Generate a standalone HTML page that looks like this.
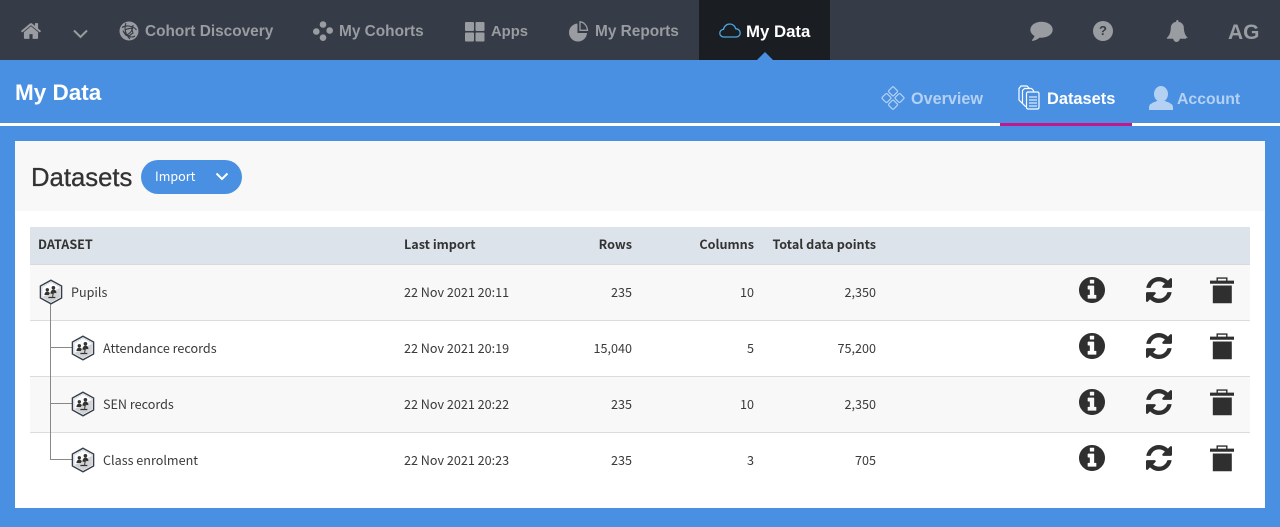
<!DOCTYPE html>
<html lang="en">
<head>
<meta charset="utf-8">
<title>My Data</title>
<style>
html,body{margin:0;padding:0;width:1280px;height:527px;overflow:hidden;background:#4a90e2}
body{position:relative;font-family:"Noto Sans CJK JP","Liberation Sans",sans-serif;color:#333}
.a{position:absolute}
.t{position:absolute;white-space:nowrap}
.n{font-family:"Liberation Sans",sans-serif;font-weight:700;font-size:15.400px;line-height:20px;color:#999ca0;top:22px}
.s{font-family:"Liberation Sans",sans-serif;font-weight:700;font-size:16.200px;line-height:20px;color:#b4d1f4;top:89px}
.c{font-size:12.600px;line-height:18px;color:#3a3a3a}
.h{font-size:12.600px;line-height:18px;font-weight:700;color:#333;top:235px}
.r{text-align:right}
svg{position:absolute;overflow:visible}
</style>
</head>
<body>
<svg width="0" height="0" style="position:absolute">
<defs>
<symbol id="hex" viewBox="0 0 24 26" overflow="visible">
<path d="M12 1.200 22.600 7v12L12 24.800 1.400 19V7Z" fill="#fff" stroke="#3a3d42" stroke-width="1.400"/>
<path d="M3 8 12 3l9 5v10l-9 5-9-5Z" fill="#fbfbfb" stroke="#9cc0e8" stroke-width=".5"/>
<path d="M20.600 9v9L12 22.600 3.600 18Z" fill="#d2d2d2"/>
<circle cx="8.300" cy="10.800" r="1.700" fill="#333"/>
<path d="M5.400 16c.2-2.200 1.200-3.400 2.900-3.400 1.200 0 2 .5 2.500 1.500l-1 1.900Z" fill="#333"/>
<circle cx="14.400" cy="8.800" r="1.800" fill="#333"/>
<path d="M11.400 14.600c.2-2.400 1.300-4 3.100-4 1.700 0 2.800 1.200 3 3.300l-2.800.4-.6 3.600h2.200v1.200H9.400v-1.200h3.800l.3-3Z" fill="#333"/>
</symbol>
<symbol id="info" viewBox="128 128 1536 1536"><path fill="#2f2f2f" d="M1152 1376v-160q0-14-9-23t-23-9h-96v-512q0-14-9-23t-23-9h-320q-14 0-23 9t-9 23v160q0 14 9 23t23 9h96v320h-96q-14 0-23 9t-9 23v160q0 14 9 23t23 9h448q14 0 23-9t9-23zm-128-896v-160q0-14-9-23t-23-9h-192q-14 0-23 9t-9 23v160q0 14 9 23t23 9h192q14 0 23-9t9-23zm640 416q0 209-103 385.500t-279.500 279.500-385.500 103-385.500-103-279.500-279.500-103-385.500 103-385.500 279.500-279.500 385.500-103 385.500 103 279.500 279.500 103 385.500z"/></symbol>
<symbol id="sync" viewBox="128 128 1536 1536"><path fill="#2f2f2f" d="M1639 1056q0 5-1 7-64 268-268 434.500t-478 166.500q-146 0-282.500-55t-243.500-157l-129 129q-19 19-45 19t-45-19-19-45v-448q0-26 19-45t45-19h448q26 0 45 19t19 45-19 45l-137 137q71 66 161 102t187 36q134 0 250-65t186-179q11-17 53-117 8-23 30-23h192q13 0 22.500 9.500t9.500 22.500zm25-800v448q0 26-19 45t-45 19h-448q-26 0-45-19t-19-45 19-45l138-138q-148-137-349-137-134 0-250 65t-186 179q-11 17-53 117-8 23-30 23h-199q-13 0-22.500-9.500t-9.500-22.500v-7q65-268 270-434.500t480-166.500q146 0 284 55.500t245 156.500l130-129q19-19 45-19t45 19 19 45z"/></symbol>
<symbol id="trash" viewBox="0 0 24 27"><path fill="#2f2f2f" d="M2.800 8.500h19V26.300h-19ZM0 3.600h24v3.200H0ZM6.500 3.800V.4h11V3.800h-1.400V1.800H7.900V3.800Z"/></symbol>
</defs>
</svg>

<!-- top nav -->
<div class="a" style="left:0;top:0;width:1280px;height:60px;background:#353c47"></div>
<div class="a" style="left:699px;top:0;width:131px;height:60px;background:#1a1e23"></div>
<svg style="left:757px;top:52px" width="16" height="8"><path d="M0 8 8 0l8 8Z" fill="#4a90e2"/></svg>

<svg style="left:20px;top:20px" width="22" height="22" viewBox="0 0 1792 1792"><path fill="#999ca0" d="M1472 992v480q0 26-19 45t-45 19h-384v-384h-256v384h-384q-26 0-45-19t-19-45v-480q0-1 .5-3t.5-3l575-474 575 474q1 2 1 6zm223-69l-62 74q-8 9-21 11h-3q-13 0-21-7l-692-577-692 577q-12 8-24 7-13-2-21-11l-62-74q-8-10-7-23.500t11-21.500l719-599q32-26 76-26t76 26l244 204v-195q0-14 9-23t23-9h192q14 0 23 9t9 23v408l219 182q10 8 11 21.500t-7 23.500z"/></svg>
<svg style="left:73px;top:29px" width="15" height="10"><path d="M1 1.500 7.500 8 14 1.500" fill="none" stroke="#999ca0" stroke-width="2"/></svg>

<svg style="left:119px;top:21px" width="20" height="20" viewBox="0 0 20 20"><circle cx="10" cy="10" r="9.500" fill="#999ca0"/><path d="M3 6.500C7 4 14 4.500 17.500 9M7 2c-2 5-1 11 4 16M16 15C13 17 6 16 4 9.500M6 14c3 0 8-3 8-10M6.500 8.500l6-1.500 1.500 5-4 3-4-2.500Z" fill="none" stroke="#353c47" stroke-width="1.100"/></svg>
<span class="t n" style="left:145px">Cohort Discovery</span>

<svg style="left:313px;top:21px" width="20" height="20" viewBox="0 0 20 20" fill="#999ca0"><circle cx="10" cy="3.500" r="3.300"/><circle cx="3.300" cy="10.500" r="3.300"/><circle cx="16.700" cy="9.500" r="3.300"/><circle cx="10" cy="16.700" r="3.300"/></svg>
<span class="t n" style="left:339px">My Cohorts</span>

<svg style="left:465px;top:22px" width="20" height="20" fill="#999ca0"><rect width="9" height="9" rx="1"/><rect x="10.500" width="9" height="9" rx="1"/><rect y="10.500" width="9" height="9" rx="1"/><rect x="10.500" y="10.500" width="9" height="9" rx="1"/></svg>
<span class="t n" style="left:491px;font-size:14.800px">Apps</span>

<svg style="left:569px;top:21px" width="20" height="20" viewBox="0 0 20 20"><path d="M8.500 2.500v9.500h9.500A9 9 0 1 1 8.500 2.500Z" fill="#999ca0"/><path d="M11 .8c3.800.3 7 3.500 7.500 8.500H11Z" fill="none" stroke="#999ca0" stroke-width="1.300"/></svg>
<span class="t n" style="left:595px">My Reports</span>

<svg style="left:719px;top:23px" width="22" height="15" viewBox="0 0 22 15"><path d="M5 14C2.500 14 .8 12.300.8 10.200c0-2 1.500-3.700 3.700-3.800C5 3.200 7.700 1 10.800 1c3 0 5.300 2 5.900 4.700 2.600.1 4.500 2 4.500 4.300 0 2.300-1.900 4-4.300 4Z" fill="none" stroke="#4aa6df" stroke-width="1.300"/></svg>
<span class="t n" style="left:746px;color:#fff;font-size:16.800px">My Data</span>

<svg style="left:1030px;top:21px" width="23" height="20" viewBox="0 0 1792 1600"><path fill="#999ca0" d="M1792 696q0 174-120 321.500t-326 233-450 85.500q-70 0-145-8-198 175-460 242-49 14-114 22-17 2-30.500-9t-17.500-29v-1q-3-4-.5-12t2-10 4.500-9.500l6-9 7-8.500 8-9q7-8 31-34.500t34.500-38 31-39.500 32.500-51 27-59 26-76q-157-89-247.500-220t-90.500-281q0-130 71-248.500t191-204.500 286-136.500 348-50.500q244 0 450 85.500t326 233 120 321.500z"/></svg>
<div class="a" style="left:1093px;top:21px;width:20px;height:20px;border-radius:50%;background:#999ca0"></div>
<span class="t" style="left:1093px;top:21px;width:20px;text-align:center;font:700 13px/20px 'Liberation Sans',sans-serif;color:#353c47">?</span>
<svg style="left:1165px;top:20px" width="22" height="22" viewBox="128 0 1616 1728"><path fill="#999ca0" d="M1744 1408q0 26-19 45t-45 19h-448q0 106-75 181t-181 75-181-75-75-181h-448q-26 0-45-19t-19-45q50-42 91-88t85-119.500 74.500-158.500 50-206 19.500-260q0-152 117-282.500t307-158.500q-8-19-8-39 0-40 28-68t68-28 68 28 28 68q0 20-8 39 190 28 307 158.500t117 282.500q0 139 19.500 260t50 206 74.500 158.500 85 119.500 91 88z"/></svg>
<span class="t" style="left:1228px;top:21px;font:700 21px/24px 'Liberation Sans',sans-serif;color:#999ca0">AG</span>

<!-- sub header -->
<span class="t" style="left:15px;top:80px;font:700 22.500px/26px 'Liberation Sans',sans-serif;color:#fff">My Data</span>

<svg style="left:881px;top:86px" width="24" height="24" viewBox="0 0 24 24" fill="none" stroke="#b4d1f4" stroke-width="1.200"><rect x="8.500" y="1.800" width="7" height="7" rx="1.200" transform="rotate(45 12 5.300)"/><rect x="2" y="8.500" width="7" height="7" rx="1.200" transform="rotate(45 5.500 12)"/><rect x="15" y="8.500" width="7" height="7" rx="1.200" transform="rotate(45 18.500 12)"/><rect x="8.500" y="15.200" width="7" height="7" rx="1.200" transform="rotate(45 12 18.700)"/></svg>
<span class="t s" style="left:911px">Overview</span>

<svg style="left:1018px;top:85px" width="22" height="25" viewBox="0 0 22 25" fill="#4a90e2" stroke="#fff" stroke-width="1.200"><path d="M1 3.500 3 1h6l2 2v14l-7 1-3-3Z"/><path d="M4.500 5.500 6.500 3.500h7l2 2v15l-8 1-3-3Z"/><rect x="8.500" y="7" width="12.500" height="17" rx="1.500"/><path d="M11 12h8M11 15h8M11 18h8M11 21h8" stroke-width="1.100"/></svg>
<span class="t s" style="left:1047px;color:#fff;font-size:16.400px">Datasets</span>

<svg style="left:1149px;top:86px" width="24" height="24" viewBox="0 0 24 24" fill="#b4d1f4"><ellipse cx="12" cy="8" rx="7" ry="8"/><path d="M0 24v-3c0-3 4-4.500 8-6h8c4 1.500 8 3 8 6v3Z"/></svg>
<span class="t s" style="left:1177px;top:90px;font-size:15.800px">Account</span>

<div class="a" style="left:0;top:123px;width:1280px;height:3px;background:#fff"></div>
<div class="a" style="left:1000px;top:123px;width:132px;height:3px;background:#c1188b"></div>

<!-- panel -->
<div class="a" style="left:15px;top:141px;width:1250px;height:367px;background:#fff"></div>
<div class="a" style="left:15px;top:141px;width:1250px;height:70px;background:#f8f8f8"></div>
<span class="t" style="left:31px;top:162px;font:400 25.700px/32px 'Liberation Sans',sans-serif;color:#333;-webkit-text-stroke:.3px #333">Datasets</span>
<div class="a" style="left:141px;top:160px;width:101px;height:34px;border-radius:17px;background:#4a90e2"></div>
<span class="t" style="left:155px;top:166px;font-size:12.600px;line-height:19px;color:#fff">Import</span>
<svg style="left:215px;top:172px" width="14" height="10"><path d="M1.500 1.500 7 7l5.500-5.500" fill="none" stroke="#fff" stroke-width="2"/></svg>

<!-- table -->
<div class="a" style="left:30px;top:227px;width:1220px;height:37px;background:#dce3ea"></div>
<div class="a" style="left:30px;top:264px;width:1220px;height:1px;background:#d9d9d9"></div>
<div class="a" style="left:30px;top:265px;width:1220px;height:55px;background:#f8f8f8"></div>
<div class="a" style="left:30px;top:320px;width:1220px;height:1px;background:#dcdcdc"></div>
<div class="a" style="left:30px;top:377px;width:1220px;height:55px;background:#f8f8f8"></div>
<div class="a" style="left:30px;top:376px;width:1220px;height:1px;background:#dcdcdc"></div>
<div class="a" style="left:30px;top:432px;width:1220px;height:1px;background:#dcdcdc"></div>

<span class="t h" style="left:38px">DATASET</span>
<span class="t h" style="left:404px">Last import</span>
<span class="t h r" style="right:648px">Rows</span>
<span class="t h r" style="right:526px">Columns</span>
<span class="t h r" style="right:404px">Total data points</span>

<!-- tree lines -->
<div class="a" style="left:50px;top:303px;width:1px;height:157px;background:#888"></div>
<div class="a" style="left:50px;top:347px;width:22px;height:1px;background:#888"></div>
<div class="a" style="left:50px;top:403px;width:22px;height:1px;background:#888"></div>
<div class="a" style="left:50px;top:459px;width:22px;height:1px;background:#888"></div>

<!-- row 1 -->
<svg style="left:39px;top:279px" width="24" height="26"><use href="#hex"/></svg>
<span class="t c" style="left:71px;top:283px">Pupils</span>
<span class="t c" style="left:404px;top:283px">22 Nov 2021 20:11</span>
<span class="t c r" style="right:648px;top:283px">235</span>
<span class="t c r" style="right:526px;top:283px">10</span>
<span class="t c r" style="right:404px;top:283px">2,350</span>
<svg style="left:1079px;top:277px" width="26" height="26"><use href="#info"/></svg>
<svg style="left:1146px;top:277px" width="26" height="26"><use href="#sync"/></svg>
<svg style="left:1210px;top:277px" width="24" height="27"><use href="#trash"/></svg>

<!-- row 2 -->
<svg style="left:71px;top:335px" width="24" height="26"><use href="#hex"/></svg>
<span class="t c" style="left:103px;top:339px">Attendance records</span>
<span class="t c" style="left:404px;top:339px">22 Nov 2021 20:19</span>
<span class="t c r" style="right:648px;top:339px">15,040</span>
<span class="t c r" style="right:526px;top:339px">5</span>
<span class="t c r" style="right:404px;top:339px">75,200</span>
<svg style="left:1079px;top:333px" width="26" height="26"><use href="#info"/></svg>
<svg style="left:1146px;top:333px" width="26" height="26"><use href="#sync"/></svg>
<svg style="left:1210px;top:333px" width="24" height="27"><use href="#trash"/></svg>

<!-- row 3 -->
<svg style="left:71px;top:391px" width="24" height="26"><use href="#hex"/></svg>
<span class="t c" style="left:103px;top:395px">SEN records</span>
<span class="t c" style="left:404px;top:395px">22 Nov 2021 20:22</span>
<span class="t c r" style="right:648px;top:395px">235</span>
<span class="t c r" style="right:526px;top:395px">10</span>
<span class="t c r" style="right:404px;top:395px">2,350</span>
<svg style="left:1079px;top:389px" width="26" height="26"><use href="#info"/></svg>
<svg style="left:1146px;top:389px" width="26" height="26"><use href="#sync"/></svg>
<svg style="left:1210px;top:389px" width="24" height="27"><use href="#trash"/></svg>

<!-- row 4 -->
<svg style="left:71px;top:447px" width="24" height="26"><use href="#hex"/></svg>
<span class="t c" style="left:103px;top:451px">Class enrolment</span>
<span class="t c" style="left:404px;top:451px">22 Nov 2021 20:23</span>
<span class="t c r" style="right:648px;top:451px">235</span>
<span class="t c r" style="right:526px;top:451px">3</span>
<span class="t c r" style="right:404px;top:451px">705</span>
<svg style="left:1079px;top:445px" width="26" height="26"><use href="#info"/></svg>
<svg style="left:1146px;top:445px" width="26" height="26"><use href="#sync"/></svg>
<svg style="left:1210px;top:445px" width="24" height="27"><use href="#trash"/></svg>
</body>
</html>
